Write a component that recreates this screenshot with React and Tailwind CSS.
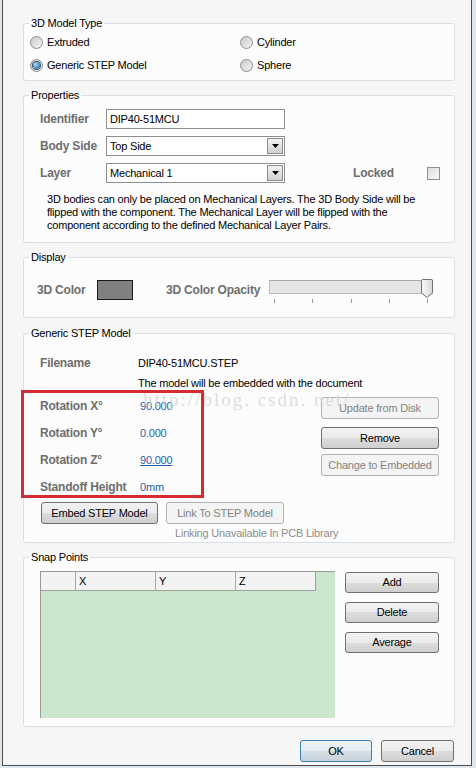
import React from 'react';

const FONT = "font-['Liberation_Sans',Arial,sans-serif]";

function Group({ title, className = '', children }) {
  return (
    <div className={`relative w-[432px] rounded-[3px] border border-[#d5dfe5] bg-[#fcfcfc] ${className}`}>
      <span className="absolute left-[5px] -top-[8px] px-[2px] leading-[14px] bg-[linear-gradient(#f6f6f6_50%,#fcfcfc_50%)]">
        {title}
      </span>
      {children}
    </div>
  );
}

function Radio({ checked, label }) {
  return (
    <div className="flex h-[23px] items-center gap-[4px]">
      <span className="flex h-[13px] w-[13px] items-center justify-center rounded-full border border-[#8e8f8f] bg-[linear-gradient(135deg,#c9c9c9,#f4f4f4)]">
        {checked && (
          <span className="h-[7px] w-[7px] rounded-full bg-[radial-gradient(circle_at_35%_35%,#a6d8f8,#1b5b8e)] ring-1 ring-[#2d4f6c]" />
        )}
      </span>
      <span>{label}</span>
    </div>
  );
}

function Btn({ children, disabled, focus, className = '' }) {
  const look = disabled
    ? 'border-[#adb2b5] bg-[#f4f4f4] text-[#838383]'
    : focus
    ? 'border-[#3c7fb1] bg-[linear-gradient(#eef4f8_0%,#e3ebf0_50%,#d4dde3_50%,#c8d2d8_100%)] text-black'
    : 'border-[#707070] bg-[linear-gradient(#f2f2f2_0%,#ebebeb_50%,#dddddd_50%,#cfcfcf_100%)] text-black';
  return (
    <div className={`flex items-center justify-center rounded-[3px] border ${look} ${className}`}>
      {children}
    </div>
  );
}

function Label({ children, className = '' }) {
  return <span className={`text-[12px] font-bold text-[#6e6e6e] ${className}`}>{children}</span>;
}

function Select({ value }) {
  return (
    <div className="flex h-[20px] w-[179px] items-center justify-between border border-[#8e8f8f] bg-white pl-[3px] pr-[1px]">
      <span>{value}</span>
      <span className="flex h-[16px] w-[16px] items-center justify-center border border-[#8a8a8a] bg-[linear-gradient(#f3f3f3,#d2d2d2)]">
        <svg width="7" height="4" viewBox="0 0 7 4">
          <path d="M0 0H7L3.5 4Z" fill="#000" />
        </svg>
      </span>
    </div>
  );
}

export default function App() {
  return (
    <div className={`h-[768px] w-[476px] overflow-hidden bg-[#dfe6ec] text-[11px] tracking-[-0.2px] text-black ${FONT}`}>
      <div className="ml-[2px] h-[766px] w-[470px] border-x border-b border-[#4a4a4a] bg-[#f6f6f6] pl-[20px] pt-[23px]">
        {/* 3D Model Type */}
        <Group title="3D Model Type" className="h-[58px]">
          <div className="grid grid-cols-[210px_1fr] pl-[6px] pt-[7px]">
            <Radio label="Extruded" />
            <Radio label="Cylinder" />
            <Radio checked label="Generic STEP Model" />
            <Radio label="Sphere" />
          </div>
        </Group>

        {/* Properties */}
        <Group title="Properties" className="mt-[14px] h-[148px]">
          <div className="pl-[16px] pt-[13px]">
            <div className="flex flex-col gap-[7px]">
              <div className="flex h-[20px] items-center">
                <Label className="w-[66px]">Identifier</Label>
                <div className="flex h-[20px] w-[179px] items-center border border-[#8e8f8f] bg-white pl-[3px]">
                  DIP40-51MCU
                </div>
              </div>
              <div className="flex h-[20px] items-center">
                <Label className="w-[66px]">Body Side</Label>
                <Select value="Top Side" />
              </div>
              <div className="flex h-[20px] items-center">
                <Label className="w-[66px]">Layer</Label>
                <Select value="Mechanical 1" />
                <Label className="ml-[68px] w-[74px]">Locked</Label>
                <span className="h-[13px] w-[13px] border border-[#8f8f8f] bg-[linear-gradient(135deg,#dcdcdc,#fafafa)]" />
              </div>
            </div>
            <p className="mt-[10px] pl-[7px] leading-[13px]">
              3D bodies can only be placed on Mechanical Layers. The 3D Body Side will be
              <br />
              flipped with the component. The Mechanical Layer will be flipped with the
              <br />
              component according to the defined Mechanical Layer Pairs.
            </p>
          </div>
        </Group>

        {/* Display */}
        <Group title="Display" className="mt-[14px] h-[61px]">
          <div className="flex items-start pl-[13px] pt-[22px]">
            <div className="flex h-[20px] w-[60px] items-center">
              <Label>3D Color</Label>
            </div>
            <div className="h-[20px] w-[36px] border border-[#1a1a1a] bg-[#808080]" />
            <div className="ml-[33px] flex h-[20px] w-[103px] items-center">
              <Label>3D Color Opacity</Label>
            </div>
            <div className="relative w-[164px]">
              <div className="h-[14px] border border-[#b9b9b9] border-t-[#a8a8a8] bg-[#e6e6e6]" />
              <svg className="absolute right-[0px] top-[-1px]" width="12" height="19" viewBox="0 0 12 19">
                <defs>
                  <linearGradient id="th" x1="0" x2="1">
                    <stop offset="0" stopColor="#fdfdfd" />
                    <stop offset="1" stopColor="#d6d6d6" />
                  </linearGradient>
                </defs>
                <path d="M1.5 0.5H10.5Q11.5 0.5 11.5 1.5V14L6 18.5L0.5 14V1.5Q0.5 0.5 1.5 0.5Z" fill="url(#th)" stroke="#707070" />
              </svg>
              <div className="relative mt-[5px] h-[4px]">
                {[5, 43, 82, 120, 158].map((x) => (
                  <span key={x} className="absolute top-0 h-[4px] w-px bg-[#9a9a9a]" style={{ left: x }} />
                ))}
              </div>
            </div>
          </div>
        </Group>

        {/* Generic STEP Model */}
        <Group title="Generic STEP Model" className="mt-[15px] h-[210px]">
          <div className="pl-[16px] pt-[22px]">
            <div className="flex h-[14px] items-center">
              <Label className="w-[98px]">Filename</Label>
              <span>DIP40-51MCU.STEP</span>
            </div>
            <div className="mt-[6px] pl-[98px] leading-[14px]">The model will be embedded with the document</div>
            <div className="mt-[6px] flex">
              <div className="flex w-[281px] flex-col gap-[7px]">
                {[
                  ['Rotation X°', '90.000', ''],
                  ['Rotation Y°', '0.000', ''],
                  ['Rotation Z°', '90.000', 'underline'],
                  ['Standoff Height', '0mm', ''],
                ].map(([l, v, u]) => (
                  <div key={l} className="flex h-[20px] items-center">
                    <Label className="w-[100px]">{l}</Label>
                    <span className={`text-[#1f5fae] ${u}`}>{v}</span>
                  </div>
                ))}
              </div>
              <div className="flex flex-col">
                <Btn disabled className="mt-[1px] h-[22px] w-[118px]">Update from Disk</Btn>
                <Btn className="mt-[8px] h-[22px] w-[118px]">Remove</Btn>
                <Btn disabled className="mt-[5px] h-[22px] w-[118px]">Change to Embedded</Btn>
              </div>
            </div>
            <div className="ml-[1px] mt-[5px] flex gap-[8px]">
              <Btn className="h-[22px] w-[117px]">Embed STEP Model</Btn>
              <Btn disabled className="h-[22px] w-[118px]">Link To STEP Model</Btn>
            </div>
            <div className="mt-[2px] pl-[135px] leading-[14px] text-[#8d8d8d]">Linking Unavailable In PCB Library</div>
          </div>
          <span className="pointer-events-none absolute left-[119px] top-[54px] whitespace-nowrap font-['Liberation_Serif',serif] text-[19px] leading-[24px] tracking-[2px] text-[#cfcfcf]/70">
            http://blog. csdn. net/
          </span>
          <div className="absolute left-[-3px] top-[56px] h-[108px] w-[183px] border-[3px] border-[#d42a30]" />
        </Group>

        {/* Snap Points */}
        <Group title="Snap Points" className="mt-[14px] h-[170px]">
          <div className="flex pl-[16px] pt-[13px]">
            <div className="h-[147px] w-[295px] border-l border-t border-[#9a9a9a] bg-[#cbe6cc]">
              <div className="flex h-[19px] w-[275px] border-b border-r border-[#a0a0a0] bg-[#f3f3f3]">
                <span className="w-[35px] border-r border-[#a8a8a8]" />
                <span className="w-[80px] border-r border-[#a8a8a8] pl-[3px] leading-[18px]">X</span>
                <span className="w-[80px] border-r border-[#a8a8a8] pl-[3px] leading-[18px]">Y</span>
                <span className="w-[79px] pl-[3px] leading-[18px]">Z</span>
              </div>
            </div>
            <div className="ml-[10px] mt-[1px] flex flex-col gap-[9px]">
              <Btn className="h-[21px] w-[94px]">Add</Btn>
              <Btn className="h-[21px] w-[94px]">Delete</Btn>
              <Btn className="h-[21px] w-[94px]">Average</Btn>
            </div>
          </div>
        </Group>

        <div className="mt-[13px] flex w-[431px] justify-end gap-[9px]">
          <Btn focus className="h-[22px] w-[72px]">OK</Btn>
          <Btn className="h-[22px] w-[73px]">Cancel</Btn>
        </div>
      </div>
    </div>
  );
}
